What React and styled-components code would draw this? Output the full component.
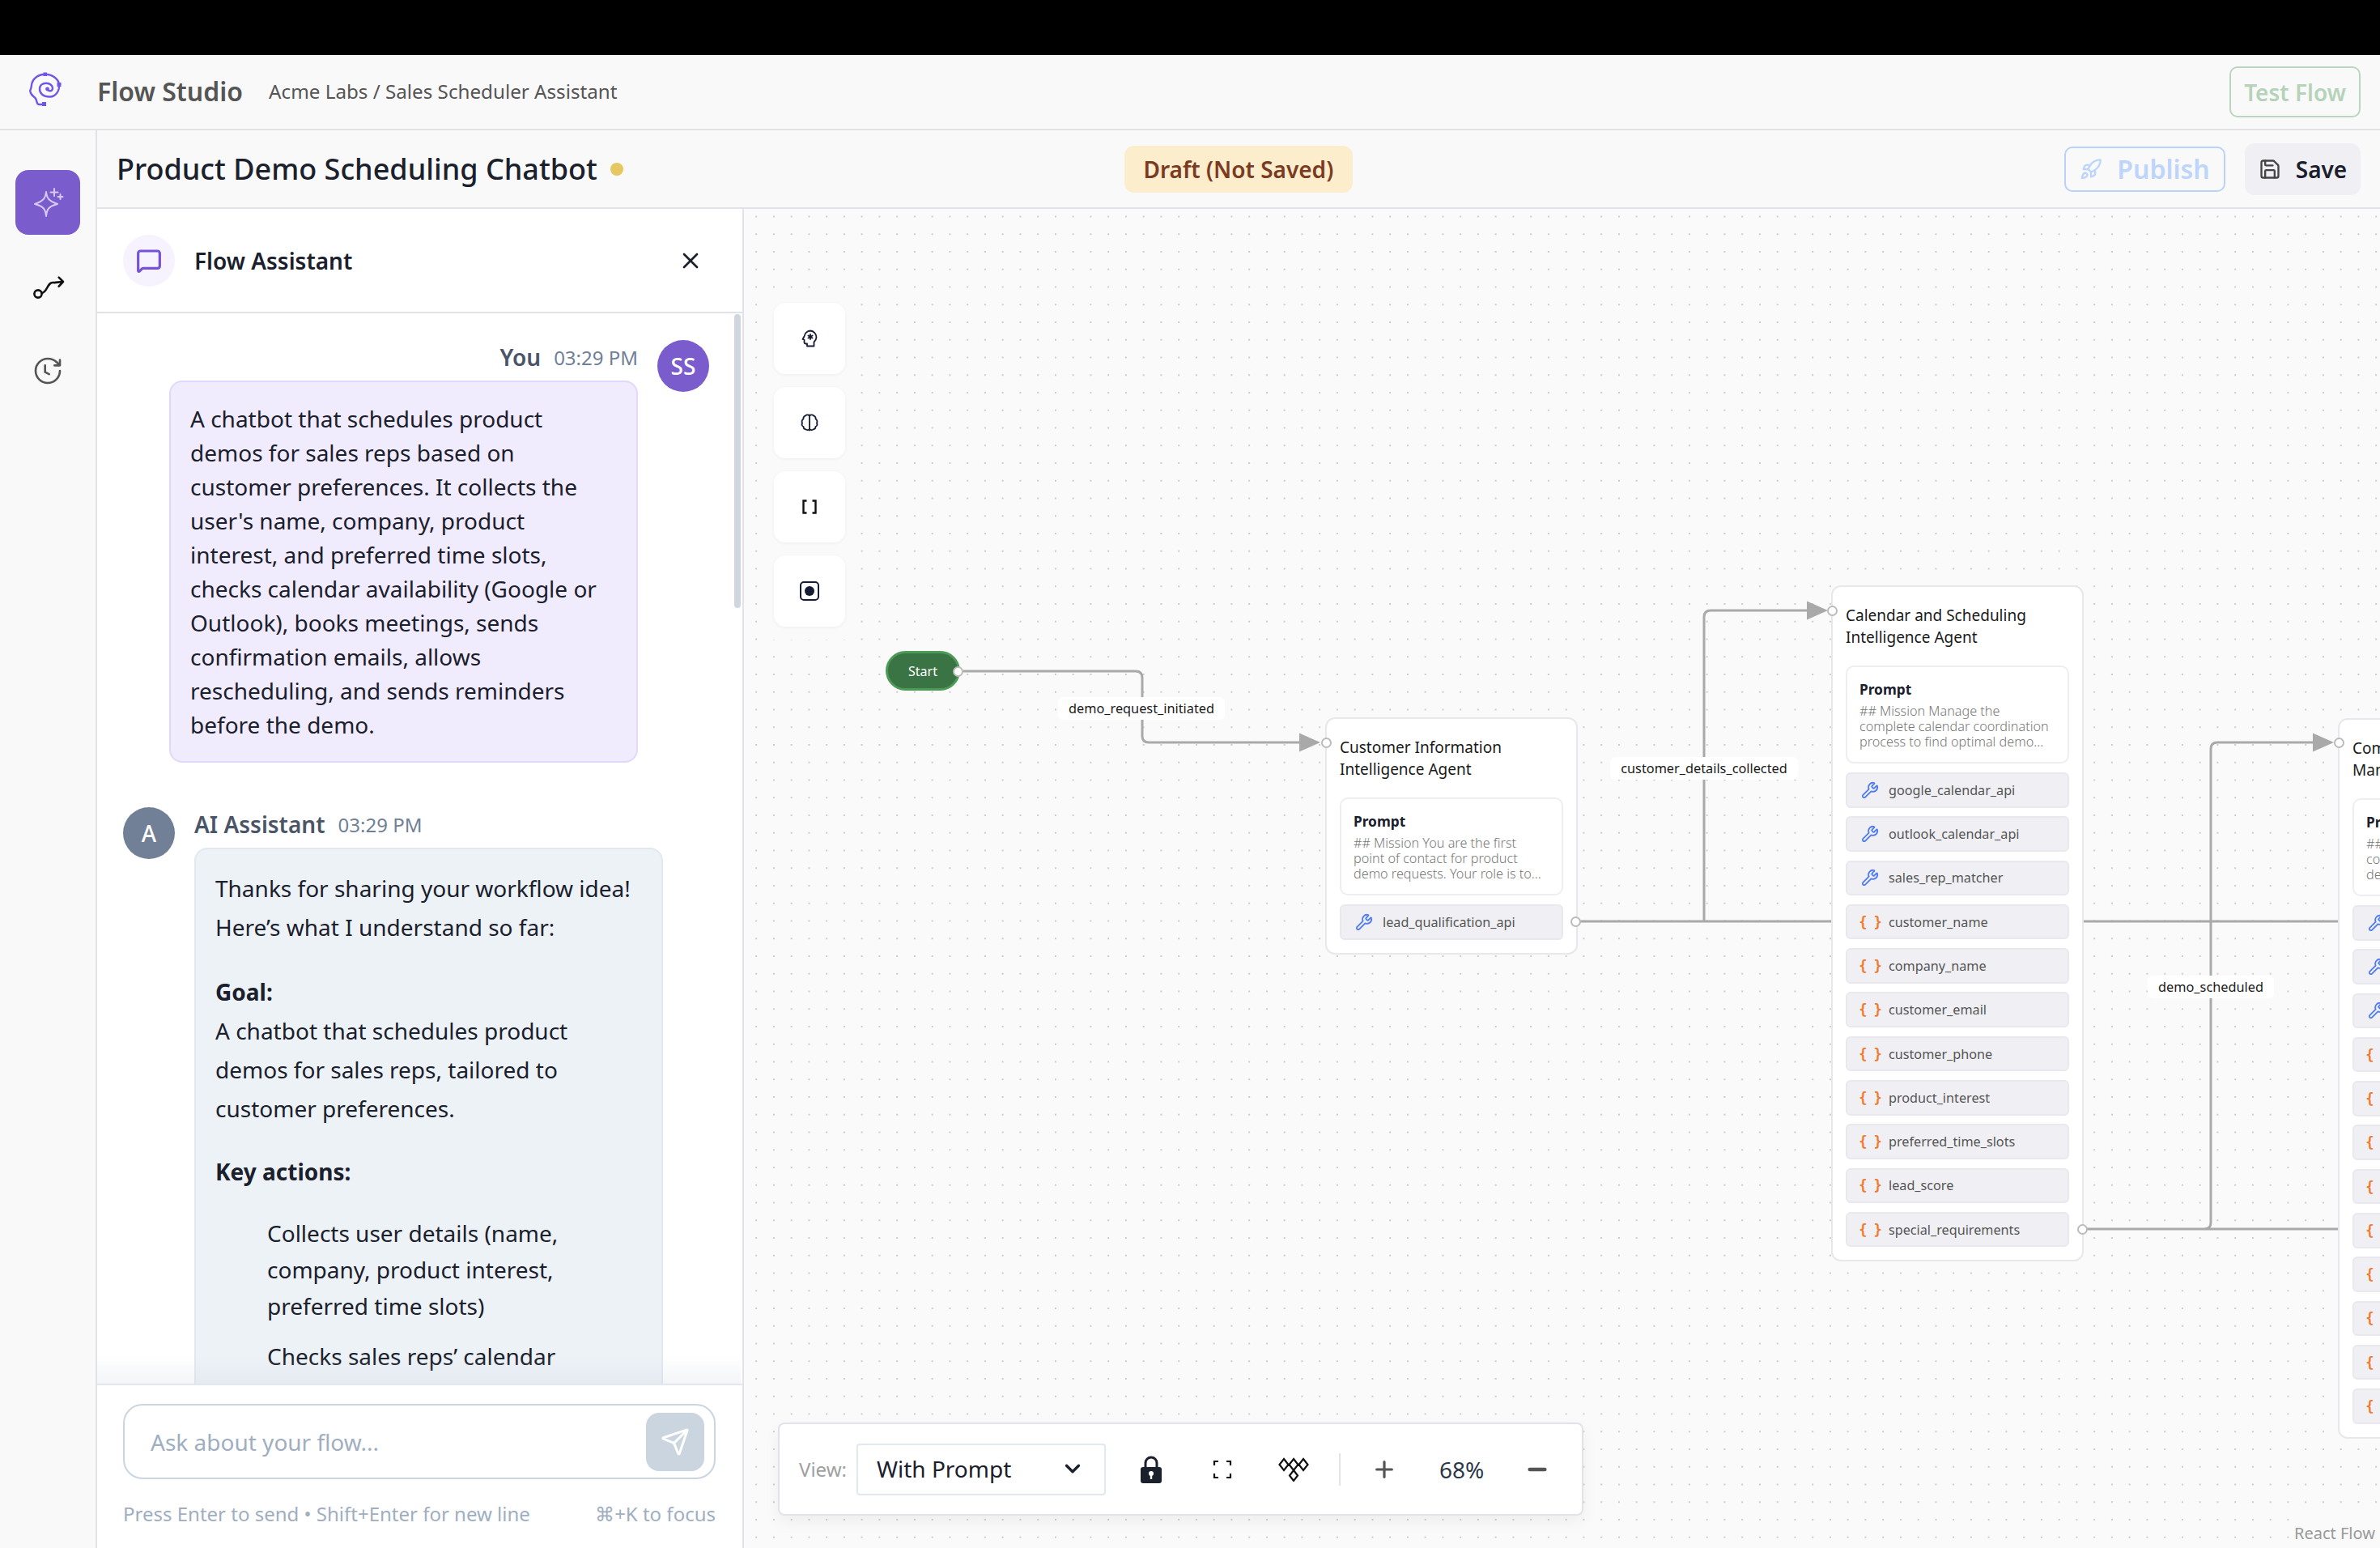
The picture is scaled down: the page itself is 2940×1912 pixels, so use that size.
import React from "react";
import styled, { createGlobalStyle } from "styled-components";
import { ChevronDown, MessageSquare, Plus, Minus, Save, Rocket, Send, Wrench, X } from "lucide-react";

const CANVAS_X = 919;
const CANVAS_Y = 258;

const Global = createGlobalStyle`
  html, body { margin: 0; padding: 0; background: #000; }
  body { font-family: "Noto Sans", "Open Sans", sans-serif; color: #1a202c; }
  * { box-sizing: border-box; }
`;

const Page = styled.div`
  width: 2940px;
  height: 1912px;
  overflow: hidden;
  display: flex;
  flex-direction: column;
  background: #f9f9f9;
`;

const BlackBar = styled.div`
  height: 68px;
  flex: none;
  background: #000;
`;

const Header = styled.header`
  height: 93px;
  flex: none;
  display: flex;
  align-items: center;
  padding: 0 24px 0 20px;
  background: #f9f9f9;
  border-bottom: 2px solid #e2e2e8;
`;

const Brand = styled.span`
  margin-left: 20px;
  margin-bottom: 2px;
  font-size: 32px;
  font-weight: 600;
  color: #555;
`;

const Crumbs = styled.span`
  margin-left: 32px;
  margin-bottom: 2px;
  font-size: 24.2px;
  color: #555;
`;

const TestFlow = styled.button`
  margin-left: auto;
  width: 162px;
  height: 63px;
  border: 2px solid #bbd6bf;
  border-radius: 10px;
  background: transparent;
  color: #b6d3ba;
  font: 600 28px "Noto Sans", sans-serif;
  padding: 0;
`;

const Body = styled.div`
  flex: 1;
  display: flex;
  min-height: 0;
`;

const Rail = styled.nav`
  width: 120px;
  flex: none;
  display: flex;
  flex-direction: column;
  gap: 24px;
  padding: 49px 0 0 19px;
  border-right: 2px solid #e2e2e8;
  background: #f9f9f9;
`;

const RailButton = styled.div`
  width: 80px;
  height: 80px;
  border-radius: 16px;
  display: flex;
  align-items: center;
  justify-content: center;
  background: ${(p) => (p.$active ? "#7b5ccc" : "transparent")};
`;

const Main = styled.div`
  flex: 1;
  min-width: 0;
  display: flex;
  flex-direction: column;
`;

const TitleBar = styled.div`
  height: 97px;
  flex: none;
  display: flex;
  align-items: center;
  padding: 0 24px;
  position: relative;
  border-bottom: 2px solid #e2e2e8;
  background: #f9f9f9;
`;

const Title = styled.h1`
  margin: 0;
  font-size: 36px;
  font-weight: 500;
  color: #1a202c;
`;

const UnsavedDot = styled.span`
  width: 16px;
  height: 16px;
  margin-left: 16px;
  border-radius: 50%;
  background: #e6c860;
`;

const DraftBadge = styled.span`
  margin-left: 619px;
  width: 282px;
  height: 58px;
  display: flex;
  align-items: center;
  justify-content: center;
  border-radius: 12px;
  background: #fcedcd;
  color: #7b3a22;
  font-size: 28px;
  font-weight: 600;
`;

const Actions = styled.div`
  margin-left: auto;
  display: flex;
  align-items: center;
  gap: 24px;
`;

const PublishButton = styled.button`
  width: 199px;
  height: 56px;
  display: flex;
  align-items: center;
  justify-content: center;
  gap: 18px;
  padding: 0;
  border: 2px solid #b9d2f8;
  border-radius: 10px;
  background: transparent;
  color: #bdd5fb;
  font: 600 32px "Noto Sans", sans-serif;
`;

const SaveButton = styled.button`
  width: 143px;
  height: 64px;
  display: flex;
  align-items: center;
  justify-content: center;
  gap: 18px;
  padding: 0;
  border: none;
  border-radius: 12px;
  background: #f0f0f4;
  color: #1a202c;
  font: 600 28px "Noto Sans", sans-serif;
`;

const Workspace = styled.div`
  flex: 1;
  display: flex;
  min-height: 0;
`;

/* chat panel */

const Panel = styled.aside`
  position: relative;
  width: 799px;
  flex: none;
  display: flex;
  flex-direction: column;
  background: #fff;
  border-right: 2px solid #e2e2e8;
`;

const PanelHead = styled.div`
  height: 129px;
  flex: none;
  display: flex;
  align-items: center;
  padding: 0 48px 0 32px;
  border-bottom: 2px solid #e2e2e8;
`;

const HeadIcon = styled.div`
  width: 64px;
  height: 64px;
  border-radius: 50%;
  display: flex;
  align-items: center;
  justify-content: center;
  background: #f6f3fe;
  color: #7653d6;
`;

const PanelTitle = styled.div`
  margin-left: 24px;
  flex: 1;
  font-size: 28px;
  font-weight: 600;
`;

const Messages = styled.div`
  flex: 1;
  min-height: 0;
  overflow: hidden;
  padding: 33px 41px 0 32px;
  display: flex;
  flex-direction: column;
  gap: 55px;
`;

const Thumb = styled.div`
  position: absolute;
  top: 130px;
  right: 2px;
  width: 8px;
  height: 363px;
  border-radius: 4px;
  background: #cfd6df;
`;

const Fade = styled.div`
  position: absolute;
  left: 0;
  right: 2px;
  bottom: 203px;
  height: 34px;
  background: linear-gradient(rgba(200, 208, 220, 0), rgba(200, 208, 220, 0.22));
`;

const Msg = styled.div`
  display: flex;
  flex: none;
  gap: 24px;
  justify-content: ${(p) => (p.$mine ? "flex-end" : "flex-start")};
`;

const Avatar = styled.div`
  width: 64px;
  height: 64px;
  flex: none;
  border-radius: 50%;
  display: flex;
  align-items: center;
  justify-content: center;
  color: #fff;
  font-size: 28px;
  font-weight: 500;
  background: ${(p) => (p.$mine ? "#7b5ccc" : "#718096")};
`;

const MsgBody = styled.div`
  width: 579px;
  display: flex;
  flex-direction: column;
  align-items: ${(p) => (p.$mine ? "flex-end" : "flex-start")};
`;

const Meta = styled.div`
  height: 42px;
  margin-bottom: 8px;
  display: flex;
  align-items: center;
  gap: 16px;
`;

const Sender = styled.span`
  font-size: 28px;
  font-weight: 600;
  color: #4a5568;
`;

const Time = styled.span`
  font-size: 24px;
  color: #718096;
`;

const Bubble = styled.div`
  width: 100%;
  padding: 24px;
  border-radius: 16px;
  font-size: 28px;
  line-height: 42px;
  color: #1a202c;
  border: 2px solid ${(p) => (p.$mine ? "#e1d8fb" : "#e2e8f0")};
  background: ${(p) => (p.$mine ? "#f0ebfd" : "#edf2f7")};
`;

const Para = styled.p`
  margin: 0 0 30px;
  line-height: 48px;

  &:first-child {
    margin-bottom: 32px;
  }
`;

const Steps = styled.ul`
  list-style: none;
  margin: 6px 0 0;
  padding: 0 0 0 64px;
`;

const Step = styled.li`
  line-height: 45px;
  margin-bottom: 17px;
`;

const Composer = styled.div`
  height: 203px;
  flex: none;
  padding: 23px 32px 0;
  border-top: 2px solid #e2e8f0;
  background: #fff;
  position: relative;
`;

const InputBox = styled.div`
  height: 93px;
  width: 732px;
  display: flex;
  align-items: center;
  justify-content: space-between;
  padding: 0 12px 0 32px;
  border: 2px solid #cbd5e0;
  border-radius: 24px;
  color: #a0aec0;
  font-size: 28px;
`;

const SendButton = styled.div`
  width: 72px;
  height: 72px;
  border-radius: 16px;
  display: flex;
  align-items: center;
  justify-content: center;
  background: #cbd5e0;
  color: #fff;
`;

const Hints = styled.div`
  width: 732px;
  margin-top: 26px;
  display: flex;
  justify-content: space-between;
  font-size: 24px;
  color: #a0aec0;
`;

/* flow canvas: nodes sit at their own coordinates */

const Canvas = styled.section`
  position: relative;
  flex: 1;
  min-width: 0;
  overflow: hidden;
  background-color: #fafafa;
  background-image: radial-gradient(circle, #cccccc 1px, transparent 1.3px);
  background-size: 21.76px 21.76px;
  background-position: 4.3px -1.4px;
`;

const Edges = styled.svg`
  position: absolute;
  left: 0;
  top: 0;
  width: 2021px;
  height: 1654px;
`;

const Tools = styled.div`
  position: absolute;
  left: 21px;
  top: 100px;
  width: 120px;
  padding: 16px;
  display: flex;
  flex-direction: column;
  gap: 16px;
  border-radius: 16px;
  background: #fafafa;
`;

const ToolButton = styled.div`
  width: 88px;
  height: 88px;
  border-radius: 14px;
  display: flex;
  align-items: center;
  justify-content: center;
  background: #fff;
  box-shadow: 0 1px 4px rgba(0, 0, 0, 0.05);
`;

const Placed = styled.div`
  position: absolute;
  left: ${(p) => p.$x - CANVAS_X}px;
  top: ${(p) => p.$y - CANVAS_Y}px;
`;

const StartNode = styled(Placed)`
  width: 92px;
  height: 49px;
  display: flex;
  align-items: center;
  justify-content: center;
  border-radius: 25px;
  background: #3a7344;
  border: 3px solid #4b9a55;
  color: #fff;
  font-size: 16px;
`;

const EdgeLabel = styled(Placed)`
  transform: translate(-50%, -50%);
  padding: 4px 13px;
  border-radius: 6px;
  background: #fff;
  color: #1a1a1a;
  font-size: 16.3px;
  line-height: 20px;
  white-space: nowrap;
`;

const Node = styled(Placed)`
  width: 312px;
  padding: 16px;
  display: flex;
  flex-direction: column;
  gap: 10.8px;
  border: 2px solid #e8e8ec;
  border-radius: 12px;
  background: #fff;
`;

const NodeTitle = styled.div`
  font-size: 19px;
  line-height: 27.2px;
  color: #1a1a1a;
  padding: 6px 0 10px;
  white-space: nowrap;
`;

const PromptBox = styled.div`
  height: 121px;
  padding: 18px 15px;
  border: 2px solid #eeeef1;
  border-radius: 10px;
  background: #fff;
`;

const PromptHead = styled.div`
  font-size: 17.3px;
  font-weight: 700;
  line-height: 20px;
  color: #1a202c;
  margin-bottom: 7px;
`;

const PromptText = styled.div`
  font-size: 16.2px;
  font-weight: 300;
  line-height: 19px;
  color: #777;
  white-space: pre;
`;

const Item = styled.div`
  height: 43.5px;
  display: flex;
  align-items: center;
  gap: 12px;
  padding-left: 17px;
  border: 2px solid #e8e8ee;
  border-radius: 6px;
  background: #f0f0f4;
  color: #555;
  font-size: 16.2px;
  white-space: nowrap;
`;

const ItemIcon = styled.span`
  width: 22px;
  flex: none;
  display: flex;
  justify-content: center;
  color: ${(p) => (p.$var ? "#f07a2e" : "#4f7cf0")};
  font: 700 17px "DejaVu Sans Mono", monospace;
  letter-spacing: -1px;
`;

const Handle = styled(Placed)`
  width: 13px;
  height: 13px;
  margin: -6.5px 0 0 -6.5px;
  border: 2px solid #bbb;
  border-radius: 50%;
  background: #fff;
`;

const ViewBar = styled.div`
  position: absolute;
  left: 42px;
  top: 1499px;
  width: 995px;
  height: 115px;
  display: flex;
  align-items: center;
  padding-left: 24px;
  border: 2px solid #e2e2e8;
  border-radius: 8px;
  background: #fff;
  box-shadow: 0 8px 20px rgba(0, 0, 0, 0.05);
`;

const ViewLabel = styled.span`
  font-size: 24px;
  color: #a0a0a0;
  margin-right: 12px;
`;

const ViewSelect = styled.div`
  width: 308px;
  height: 64px;
  display: flex;
  align-items: center;
  justify-content: space-between;
  padding: 0 24px 2px 23px;
  border: 2px solid #e2e8f0;
  border-radius: 4px;
  font-size: 28px;
  color: #1a202c;
`;

const BarIcon = styled.span`
  display: flex;
  justify-content: center;
  width: ${(p) => p.$w}px;
  margin-left: ${(p) => p.$gap}px;
  color: #1a202c;
`;

const BarDivider = styled.span`
  width: 2px;
  height: 40px;
  margin-left: 36px;
  background: #e2e2e8;
`;

const Zoom = styled.span`
  margin-left: 52px;
  font-size: 28px;
  color: #2d3748;
`;

const Attribution = styled.div`
  position: absolute;
  right: 0;
  bottom: 0;
  width: 112px;
  height: 37px;
  display: flex;
  align-items: center;
  justify-content: center;
  background: #fafafa;
  color: #999;
  font-size: 20px;
`;

const LogoIcon = () => (
  <svg width="80" height="60" viewBox="0 4 80 60" fill="none" stroke="#7255e8" strokeWidth="2.4" strokeLinecap="round" strokeLinejoin="round">
    <path d="M35 49H28C24.5 49 26 43 23.5 41C21 39 17 35 17.3 32C18 30 18.8 28 19 25C20 17 27 12 35.7 11.7C44 11.7 52 17 53 24C54 33 48 40 41 39.5C34 39.5 29 36 29 30C29 25 33 22.7 37 22.7C42 22.7 45 26 45 29C45 32 42 33.5 39 31" />
    <circle cx="38.5" cy="30" r="2.4" fill="#7255e8" stroke="none" />
    <rect x="32" y="46" width="5" height="5" fill="#7255e8" stroke="none" />
    <rect x="33.5" y="9.5" width="4.5" height="4.5" fill="#7255e8" stroke="none" />
    <rect x="50.5" y="22" width="5" height="5" fill="#7255e8" stroke="none" />
  </svg>
);

const SparkIcon = () => (
  <svg width="44" height="44" viewBox="0 0 44 44" fill="none" stroke="#d6caf5" strokeWidth="2" strokeLinecap="round" strokeLinejoin="round">
    <path d="M18 11C19 19 21 22 32 26C21 29 19 32 18 41C17 32 15 29 4 26C15 22 17 19 18 11Z" transform="translate(2 -2)" />
    <path d="M30 5v9M25.5 9.5h9M37.5 12v6M34.5 15h6" />
  </svg>
);

const RouteIcon = () => (
  <svg width="44" height="44" viewBox="0 0 44 44" fill="none" stroke="#111" strokeWidth="2.6" strokeLinecap="round" strokeLinejoin="round">
    <circle cx="10" cy="31" r="4.6" />
    <path d="M14.5 30C22 29 21 16 29 17C32 17.5 36 16 41 16M35.7 10.7L41 16L35.7 21.7" />
  </svg>
);

const HistoryIcon = () => (
  <svg width="40" height="40" viewBox="0 0 24 24" fill="none" stroke="#555" strokeWidth="1.6" strokeLinecap="round" strokeLinejoin="round">
    <path d="M21 12a9 9 0 1 1-9-9 9.75 9.75 0 0 1 6.74 2.74L21 8M21 4v4h-4M10 8v5l3 1.5" />
  </svg>
);

const HeadAsterisk = () => (
  <svg width="24" height="24" viewBox="0 0 24 24" fill="none" stroke="#161c33" strokeWidth="1.8" strokeLinecap="round" strokeLinejoin="round">
    <path d="M13 2.5a8 8 0 0 1 7.5 8c0 3-1.5 4.5-3 6v5H9v-3H7a1.5 1.5 0 0 1-1.5-1.5v-3.5L3.5 13l2-3.5a8 8 0 0 1 7.5-7Z" />
    <path d="M13 7v6M10.4 8.5l5.2 3M15.6 8.5l-5.2 3" />
  </svg>
);

const BrainIcon = () => (
  <svg width="24" height="24" viewBox="0 0 24 24" fill="none" stroke="#161c33" strokeWidth="1.8" strokeLinecap="round" strokeLinejoin="round">
    <path d="M12 2.5v19M12 4a3 3 0 0 0-5-.5 3.2 3.2 0 0 0-2.5 4 3.6 3.6 0 0 0-1.5 5 3.4 3.4 0 0 0 1.5 4.5 3.2 3.2 0 0 0 3 3.3A3 3 0 0 0 12 20M12 4a3 3 0 0 1 5-.5 3.2 3.2 0 0 1 2.5 4 3.6 3.6 0 0 1 1.5 5 3.4 3.4 0 0 1-1.5 4.5 3.2 3.2 0 0 1-3 3.3A3 3 0 0 1 12 20" />
  </svg>
);

const BracketIcon = () => (
  <svg width="24" height="24" viewBox="0 0 24 24" fill="none" stroke="#111" strokeWidth="2.4">
    <path d="M8.5 4.5H4.5V19.5H8.5M15.5 4.5H19.5V19.5H15.5" />
  </svg>
);

const RecordIcon = () => (
  <svg width="26" height="26" viewBox="0 0 26 26" fill="#161c33">
    <rect x="2" y="2" width="22" height="22" rx="4" fill="none" stroke="#161c33" strokeWidth="2" />
    <circle cx="13" cy="13" r="6" />
  </svg>
);

const LockIcon = () => (
  <svg width="28" height="34" viewBox="0 0 28 34">
    <path d="M7 16V9a7 7 0 0 1 14 0v7" fill="none" stroke="#1a202c" strokeWidth="3" />
    <rect x="1" y="14" width="26" height="20" rx="3" fill="#1a202c" />
    <circle cx="14" cy="22" r="3" fill="#fff" />
    <rect x="12.8" y="23" width="2.4" height="6" fill="#fff" />
  </svg>
);

const FrameIcon = () => (
  <svg width="24" height="24" viewBox="0 0 24 24" fill="none" stroke="#111" strokeWidth="2.2">
    <path d="M2 7V2H7M17 2H22V7M22 17V22H17M7 22H2V17" />
  </svg>
);

const LayoutIcon = () => (
  <svg width="40" height="30" viewBox="0 0 40 30" fill="none" stroke="#111" strokeWidth="2.2" strokeLinejoin="miter">
    <path d="M8 2L13.5 9L8 16L2.5 9ZM20 2L25.5 9L20 16L14.5 9ZM32 2L37.5 9L32 16L26.5 9ZM20 16L25 22.5L20 29L15 22.5Z" />
  </svg>
);

const customerItems = [
  { name: "lead_qualification_api" },
];

const calendarItems = [
  { name: "google_calendar_api" },
  { name: "outlook_calendar_api" },
  { name: "sales_rep_matcher" },
  { name: "customer_name", v: true },
  { name: "company_name", v: true },
  { name: "customer_email", v: true },
  { name: "customer_phone", v: true },
  { name: "product_interest", v: true },
  { name: "preferred_time_slots", v: true },
  { name: "lead_score", v: true },
  { name: "special_requirements", v: true },
];

const commsItems = [
  { name: "email_service_api" },
  { name: "calendar_invite_api" },
  { name: "reminder_scheduler" },
  { name: "customer_name", v: true },
  { name: "customer_email", v: true },
  { name: "meeting_time", v: true },
  { name: "meeting_link", v: true },
  { name: "sales_rep_name", v: true },
  { name: "product_interest", v: true },
  { name: "confirmation_sent", v: true },
  { name: "reminder_sent", v: true },
  { name: "reschedule_link", v: true },
];

const FlowNode = ({ x, y, title, prompt, items }) => (
  <Node $x={x} $y={y}>
    <NodeTitle>
      {title[0]}
      <br />
      {title[1]}
    </NodeTitle>
    <PromptBox>
      <PromptHead>Prompt</PromptHead>
      <PromptText>{prompt}</PromptText>
    </PromptBox>
    {items.map((it) => (
      <Item key={it.name}>
        <ItemIcon $var={it.v}>{it.v ? "{ }" : <Wrench size={22} strokeWidth={2} />}</ItemIcon>
        {it.name}
      </Item>
    ))}
  </Node>
);

const App = () => (
  <Page>
    <Global />
    <BlackBar />
    <Header>
      <LogoIcon />
      <Brand>Flow Studio</Brand>
      <Crumbs>Acme Labs / Sales Scheduler Assistant</Crumbs>
      <TestFlow>Test Flow</TestFlow>
    </Header>
    <Body>
      <Rail>
        <RailButton $active>
          <SparkIcon />
        </RailButton>
        <RailButton>
          <RouteIcon />
        </RailButton>
        <RailButton>
          <HistoryIcon />
        </RailButton>
      </Rail>
      <Main>
        <TitleBar>
          <Title>Product Demo Scheduling Chatbot</Title>
          <UnsavedDot />
          <DraftBadge>Draft (Not Saved)</DraftBadge>
          <Actions>
            <PublishButton>
              <Rocket size={28} />
              Publish
            </PublishButton>
            <SaveButton>
              <Save size={28} color="#444" />
              Save
            </SaveButton>
          </Actions>
        </TitleBar>
        <Workspace>
          <Panel>
            <PanelHead>
              <HeadIcon>
                <MessageSquare size={32} strokeWidth={2.4} />
              </HeadIcon>
              <PanelTitle>Flow Assistant</PanelTitle>
              <X size={32} color="#1a202c" />
            </PanelHead>
            <Messages>
              <Msg $mine>
                <MsgBody $mine>
                  <Meta>
                    <Sender>You</Sender>
                    <Time>03:29 PM</Time>
                  </Meta>
                  <Bubble $mine>
                    A chatbot that schedules product demos for sales reps based on customer preferences. It
                    collects the user's name, company, product interest, and preferred time slots, checks
                    calendar availability (Google or Outlook), books meetings, sends confirmation emails,
                    allows rescheduling, and sends reminders before the demo.
                  </Bubble>
                </MsgBody>
                <Avatar $mine>SS</Avatar>
              </Msg>
              <Msg>
                <Avatar>A</Avatar>
                <MsgBody>
                  <Meta>
                    <Sender>AI Assistant</Sender>
                    <Time>03:29 PM</Time>
                  </Meta>
                  <Bubble>
                    <Para>Thanks for sharing your workflow idea! Here’s what I understand so far:</Para>
                    <Para>
                      <strong>Goal:</strong>
                      <br />A chatbot that schedules product demos for sales reps, tailored to customer
                      preferences.
                    </Para>
                    <Para>
                      <strong>Key actions:</strong>
                    </Para>
                    <Steps>
                      <Step>Collects user details (name, company, product interest, preferred time slots)</Step>
                      <Step>Checks sales reps’ calendar availability</Step>
                    </Steps>
                  </Bubble>
                </MsgBody>
              </Msg>
            </Messages>
            <Fade />
            <Composer>
              <InputBox>
                Ask about your flow...
                <SendButton>
                  <Send size={36} />
                </SendButton>
              </InputBox>
              <Hints>
                <span>Press Enter to send • Shift+Enter for new line</span>
                <span>⌘+K to focus</span>
              </Hints>
            </Composer>
            <Thumb />
          </Panel>
          <Canvas>
            <Edges viewBox={`${CANVAS_X} ${CANVAS_Y} 2021 1654`} fill="none">
              <g stroke="#a9a9a9" strokeWidth="3">
                <path d="M1190 829H1403Q1411 829 1411 837V909Q1411 917 1419 917H1610" />
                <path d="M1952 1138H2263M2105 1138V762Q2105 754 2113 754H2235" />
                <path d="M2573 1138H2888" />
                <path d="M2578 1518H2888M2723 1518Q2731 1518 2731 1510V925Q2731 917 2739 917H2860" />
              </g>
              <g fill="#a9a9a9">
                <polygon points="1605,905.5 1631,917 1605,928.5" />
                <polygon points="2232,742.5 2258,754 2232,765.5" />
                <polygon points="2857,905.5 2883,917 2857,928.5" />
              </g>
            </Edges>
            <Tools>
              <ToolButton>
                <HeadAsterisk />
              </ToolButton>
              <ToolButton>
                <BrainIcon />
              </ToolButton>
              <ToolButton>
                <BracketIcon />
              </ToolButton>
              <ToolButton>
                <RecordIcon />
              </ToolButton>
            </Tools>
            <StartNode $x={1094} $y={804}>
              Start
            </StartNode>
            <Handle $x={1183} $y={829} />
            <EdgeLabel $x={1410} $y={875}>demo_request_initiated</EdgeLabel>
            <EdgeLabel $x={2105} $y={949}>customer_details_collected</EdgeLabel>
            <EdgeLabel $x={2731} $y={1219}>demo_scheduled</EdgeLabel>
            <FlowNode
              x={1637}
              y={886}
              title={["Customer Information", "Intelligence Agent"]}
              prompt={"## Mission You are the first\npoint of contact for product\ndemo requests. Your role is to..."}
              items={customerItems}
            />
            <FlowNode
              x={2262}
              y={723}
              title={["Calendar and Scheduling", "Intelligence Agent"]}
              prompt={"## Mission Manage the\ncomplete calendar coordination\nprocess to find optimal demo..."}
              items={calendarItems}
            />
            <FlowNode
              x={2888}
              y={887}
              title={["Communication and", "Management Agent"]}
              prompt={"## Mission Handle all\ncommunication with customers\ndemo confirmations..."}
              items={commsItems}
            />
            <Handle $x={1638} $y={917} />
            <Handle $x={1946} $y={1138} />
            <Handle $x={2263} $y={754} />
            <Handle $x={2572} $y={1518} />
            <Handle $x={2889} $y={917} />
            <ViewBar>
              <ViewLabel>View:</ViewLabel>
              <ViewSelect>
                With Prompt
                <ChevronDown size={30} strokeWidth={2.6} />
              </ViewSelect>
              <BarIcon $w={28} $gap={42}>
                <LockIcon />
              </BarIcon>
              <BarIcon $w={24} $gap={62}>
                <FrameIcon />
              </BarIcon>
              <BarIcon $w={40} $gap={56}>
                <LayoutIcon />
              </BarIcon>
              <BarDivider />
              <BarIcon $w={32} $gap={38}>
                <Plus size={32} color="#555" strokeWidth={2.4} />
              </BarIcon>
              <Zoom>68%</Zoom>
              <BarIcon $w={32} $gap={50}>
                <Minus size={32} color="#555" strokeWidth={3.4} />
              </BarIcon>
            </ViewBar>
            <Attribution>React Flow</Attribution>
          </Canvas>
        </Workspace>
      </Main>
    </Body>
  </Page>
);

export default App;
